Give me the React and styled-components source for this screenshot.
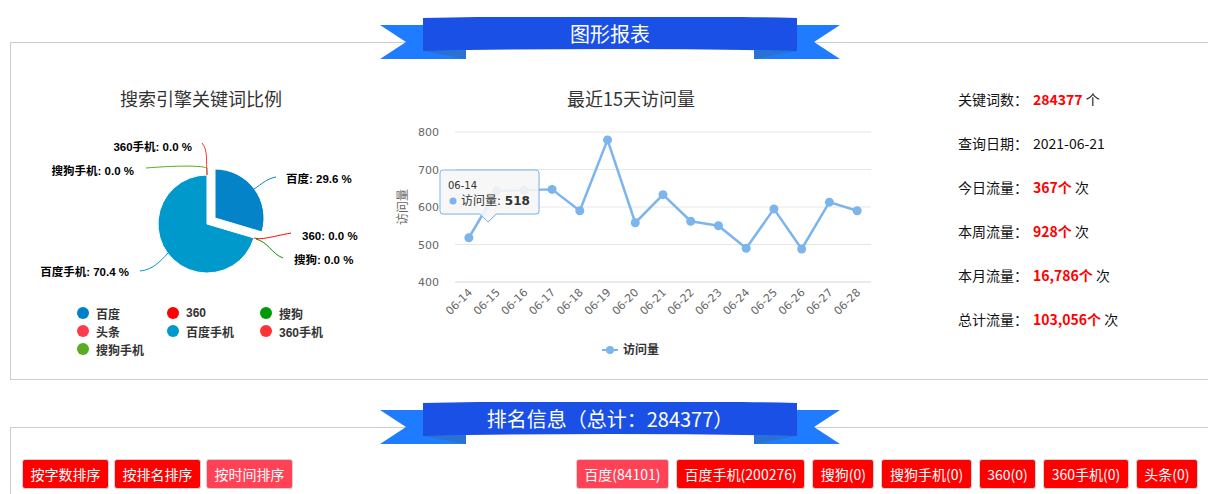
import React from 'react'
import styled, { createGlobalStyle } from 'styled-components'

const Global = createGlobalStyle`
html,body{margin:0;padding:0;overflow:hidden;background:#fff;}
body{font-family:"Noto Sans CJK SC","Noto Sans",sans-serif;color:#333;}
`
const Page = styled.div`
width:1208px;
padding-top:17px;
`
const Section = styled.section`
margin-left:10px;
width:1200px;
margin-top:${p => p.$gap || 0}px;
`
const RibbonBox = styled.div`
position:relative;
z-index:1;
width:460px;
height:42px;
margin:0 auto;
`
const RibbonArt = styled.svg`
position:absolute;
left:0;
top:0;
`
const RibbonText = styled.div`
position:relative;
height:33px;
line-height:33px;
text-align:center;
color:#fff;
font-size:20px;
`
const Panel = styled.div`
margin-top:-17px;
border:1px solid #ccc;
box-sizing:border-box;
height:${p => p.$h}px;
`
const ChartsRow = styled(Panel)`
display:grid;
grid-template-columns:380px 490px 1fr;
padding-top:43px;
`
const ChartCol = styled.div`
display:flex;
flex-direction:column;
align-items:center;
`
const ChartTitle = styled.div`
font-size:18px;
line-height:24px;
color:#333;
margin-right:${p => p.$shift || 0}px;
`
const Legend = styled.div`
align-self:flex-start;
margin:4px 0 0 66px;
display:grid;
grid-template-columns:90px 93px auto;
`
const LegendItem = styled.div`
display:flex;
align-items:center;
gap:7px;
height:18px;
font-size:12px;
font-weight:bold;
color:#333;
font-family:"Liberation Sans","Noto Sans CJK SC",sans-serif;
&::before{
  content:'';
  width:12px;
  height:12px;
  border-radius:50%;
  background:${p => p.$c};
}
`
const Stats = styled.div`
padding:0 0 0 77px;
margin-top:-9px;
`
const StatRow = styled.div`
display:flex;
height:44px;
line-height:44px;
font-size:14px;
color:#111;
`
const StatLabel = styled.span`
width:75px;
`
const StatValue = styled.span`
color:#f00;
font-weight:bold;
`
const StatUnit = styled.span`
white-space:pre;
`
const ButtonsBar = styled(Panel)`
display:flex;
justify-content:space-between;
align-items:flex-start;
padding:31px 11px 0;
`
const Group = styled.div`
display:flex;
gap:${p => p.$gap}px;
`
const Btn = styled.button`
margin:0;
height:30px;
padding:0 7.5px;
border:1px solid #d3d3d3;
border-radius:3px;
background:${p => (p.$active ? '#ff4256' : '#ff0000')};
color:#fff;
font-size:14px;
font-family:"Noto Sans CJK SC",sans-serif;
cursor:pointer;
`

const Ribbon = ({ children }) => (
  <RibbonBox>
    <RibbonArt width="460" height="42" viewBox="0 0 460 42">
      <polygon points="0,8 86,8 86,42 0,42 26,25" fill="#1f7bff" />
      <polygon points="374,8 460,8 434,25 460,42 374,42" fill="#1f7bff" />
      <polygon points="43,34 86,34 86,42" fill="#2b72cf" />
      <polygon points="374,34 417,34 374,42" fill="#2b72cf" />
      <path d="M43,1 Q230,-3 417,1 L417,34 Q230,30 43,34 Z" fill="#1a50e6" />
    </RibbonArt>
    <RibbonText>{children}</RibbonText>
  </RibbonBox>
)

const cx = 207, cy = 224, r = 49
const pt = (deg, rad = r, ox = 0, oy = 0) => {
  const a = (deg * Math.PI) / 180
  return [cx + ox + rad * Math.sin(a), cy + oy - rad * Math.cos(a)]
}
const baiduEnd = 106.56
const [ox, oy] = [8, -6]
const s1 = pt(0, r, ox, oy), e1 = pt(baiduEnd, r, ox, oy)
const s2 = pt(baiduEnd), e2 = pt(360 - 0.01)

const labelFont = { fontFamily: '"Liberation Sans","Noto Sans CJK SC",sans-serif', fontSize: 11.5, fontWeight: 'bold', fill: '#000' }

const PieChart = () => (
  <svg width="380" height="190" viewBox="11 110 380 190">
    <path d={`M${cx + ox},${cy + oy} L${s1[0]},${s1[1]} A${r},${r} 0 0 1 ${e1[0]},${e1[1]} Z`} fill="#0583c9" stroke="#fff" strokeWidth="1" />
    <path d={`M${cx},${cy} L${s2[0]},${s2[1]} A${r},${r} 0 1 1 ${e2[0]},${e2[1]} Z`} fill="#0099cc" stroke="#fff" strokeWidth="1" />
    <g fill="none" strokeWidth="1">
      <path d="M254,189 C262,184 266,179 276,177" stroke="#0583c9" />
      <path d="M254,238 C262,240 270,237 291,233" stroke="#ff0000" />
      <path d="M256,239 C268,242 272,254 283,258" stroke="#009900" />
      <path d="M168,253 C160,262 152,270 140,271" stroke="#0099cc" />
      <path d="M207,175 L207,168 C200,165 170,166 146,168" stroke="#5aac1e" />
      <path d="M207,175 C206,160 208,150 202,143" stroke="#ff3333" />
    </g>
    <text x="286" y="183" style={labelFont}>百度: 29.6 %</text>
    <text x="302" y="240" style={labelFont}>360: 0.0 %</text>
    <text x="294" y="264" style={labelFont}>搜狗: 0.0 %</text>
    <text x="129" y="276" textAnchor="end" style={labelFont}>百度手机: 70.4 %</text>
    <text x="134" y="175" textAnchor="end" style={labelFont}>搜狗手机: 0.0 %</text>
    <text x="192" y="151" textAnchor="end" style={labelFont}>360手机: 0.0 %</text>
  </svg>
)

const days = ['06-14', '06-15', '06-16', '06-17', '06-18', '06-19', '06-20', '06-21', '06-22', '06-23', '06-24', '06-25', '06-26', '06-27', '06-28']
const visits = [518, 643, 645, 647, 590, 779, 558, 633, 562, 550, 490, 595, 488, 613, 590]
const px = i => 455 + (416 / 15) * (i + 0.5)
const py = v => 282 - (v - 400) * 0.375
const axisFont = { fontFamily: '"DejaVu Sans","Noto Sans CJK SC",sans-serif', fontSize: 11, fill: '#666' }
const tipFont = { fontFamily: '"DejaVu Sans","Noto Sans CJK SC",sans-serif', fill: '#333' }

const LineChart = () => (
  <svg width="490" height="262" viewBox="391 110 490 262">
    {[800, 700, 600, 500].map(v => (
      <line key={v} x1="455" x2="871" y1={py(v)} y2={py(v)} stroke="#e6e6e6" />
    ))}
    <line x1="455" x2="871" y1="282" y2="282" stroke="#ccd6eb" />
    {[800, 700, 600, 500, 400].map(v => (
      <text key={v} x="439" y={py(v) + 4} textAnchor="end" style={axisFont}>{v}</text>
    ))}
    <text x="407" y="207" textAnchor="middle" transform="rotate(-90 407 207)" style={{ ...axisFont, fontSize: 12 }}>访问量</text>
    {days.map((d, i) => (
      <text key={d} x={px(i) + 4} y="293" textAnchor="end" transform={`rotate(-45 ${px(i) + 4} 293)`} style={axisFont}>{d}</text>
    ))}
    <polyline points={visits.map((v, i) => `${px(i)},${py(v)}`).join(' ')} fill="none" stroke="#7cb5ec" strokeWidth="2.5" strokeLinejoin="round" />
    {visits.map((v, i) => (
      <circle key={i} cx={px(i)} cy={py(v)} r="4.5" fill="#7cb5ec" />
    ))}
    <g>
      <path d="M443,170 H536 Q539,170 539,173 V211 Q539,214 536,214 H496 L488,222 L480,214 H443 Q440,214 440,211 V173 Q440,170 443,170 Z" fill="#000" opacity="0.06" transform="translate(1 1)" />
      <path d="M443,170 H536 Q539,170 539,173 V211 Q539,214 536,214 H496 L488,222 L480,214 H443 Q440,214 440,211 V173 Q440,170 443,170 Z" fill="rgba(247,247,247,0.9)" stroke="#7cb5ec" />
      <text x="448" y="189" style={{ ...tipFont, fontSize: 10 }}>06-14</text>
      <circle cx="453" cy="201" r="3.5" fill="#7cb5ec" />
      <text x="461" y="205" style={{ ...tipFont, fontSize: 12 }}>访问量: <tspan fontWeight="bold">518</tspan></text>
    </g>
    <line x1="602" x2="618" y1="350" y2="350" stroke="#7cb5ec" strokeWidth="2" />
    <circle cx="610" cy="350" r="4" fill="#7cb5ec" />
    <text x="623" y="354" style={{ ...tipFont, fontSize: 12, fontWeight: 'bold' }}>访问量</text>
  </svg>
)

const legend = [
  ['百度', '#0080c8'], ['360', '#ff0000'], ['搜狗', '#009900'],
  ['头条', '#ff3b4b'], ['百度手机', '#0099cc'], ['360手机', '#ff3333'],
  ['搜狗手机', '#5aac1e'],
]

const stats = [
  ['关键词数：', '284377', ' 个'],
  ['查询日期：', null, '2021-06-21'],
  ['今日流量：', '367个', ' 次'],
  ['本周流量：', '928个', ' 次'],
  ['本月流量：', '16,786个', ' 次'],
  ['总计流量：', '103,056个', ' 次'],
]

const App = () => (
  <Page>
    <Global />
    <Section>
      <Ribbon>图形报表</Ribbon>
      <ChartsRow $h={338}>
        <ChartCol>
          <ChartTitle>搜索引擎关键词比例</ChartTitle>
          <PieChart />
          <Legend>
            {legend.map(([n, c]) => (
              <LegendItem key={n} $c={c}>{n}</LegendItem>
            ))}
          </Legend>
        </ChartCol>
        <ChartCol>
          <ChartTitle $shift={10}>最近15天访问量</ChartTitle>
          <LineChart />
        </ChartCol>
        <Stats>
          {stats.map(([l, v, s]) => (
            <StatRow key={l}>
              <StatLabel>{l}</StatLabel>
              {v && <StatValue>{v}</StatValue>}
              <StatUnit>{s}</StatUnit>
            </StatRow>
          ))}
        </Stats>
      </ChartsRow>
    </Section>
    <Section $gap={22}>
      <Ribbon>排名信息（总计：284377）</Ribbon>
      <ButtonsBar $h={100}>
        <Group $gap={5}>
          <Btn>按字数排序</Btn>
          <Btn>按排名排序</Btn>
          <Btn $active>按时间排序</Btn>
        </Group>
        <Group $gap={7}>
          <Btn $active>百度(84101)</Btn>
          <Btn>百度手机(200276)</Btn>
          <Btn>搜狗(0)</Btn>
          <Btn>搜狗手机(0)</Btn>
          <Btn>360(0)</Btn>
          <Btn>360手机(0)</Btn>
          <Btn>头条(0)</Btn>
        </Group>
      </ButtonsBar>
    </Section>
  </Page>
)

export default App
